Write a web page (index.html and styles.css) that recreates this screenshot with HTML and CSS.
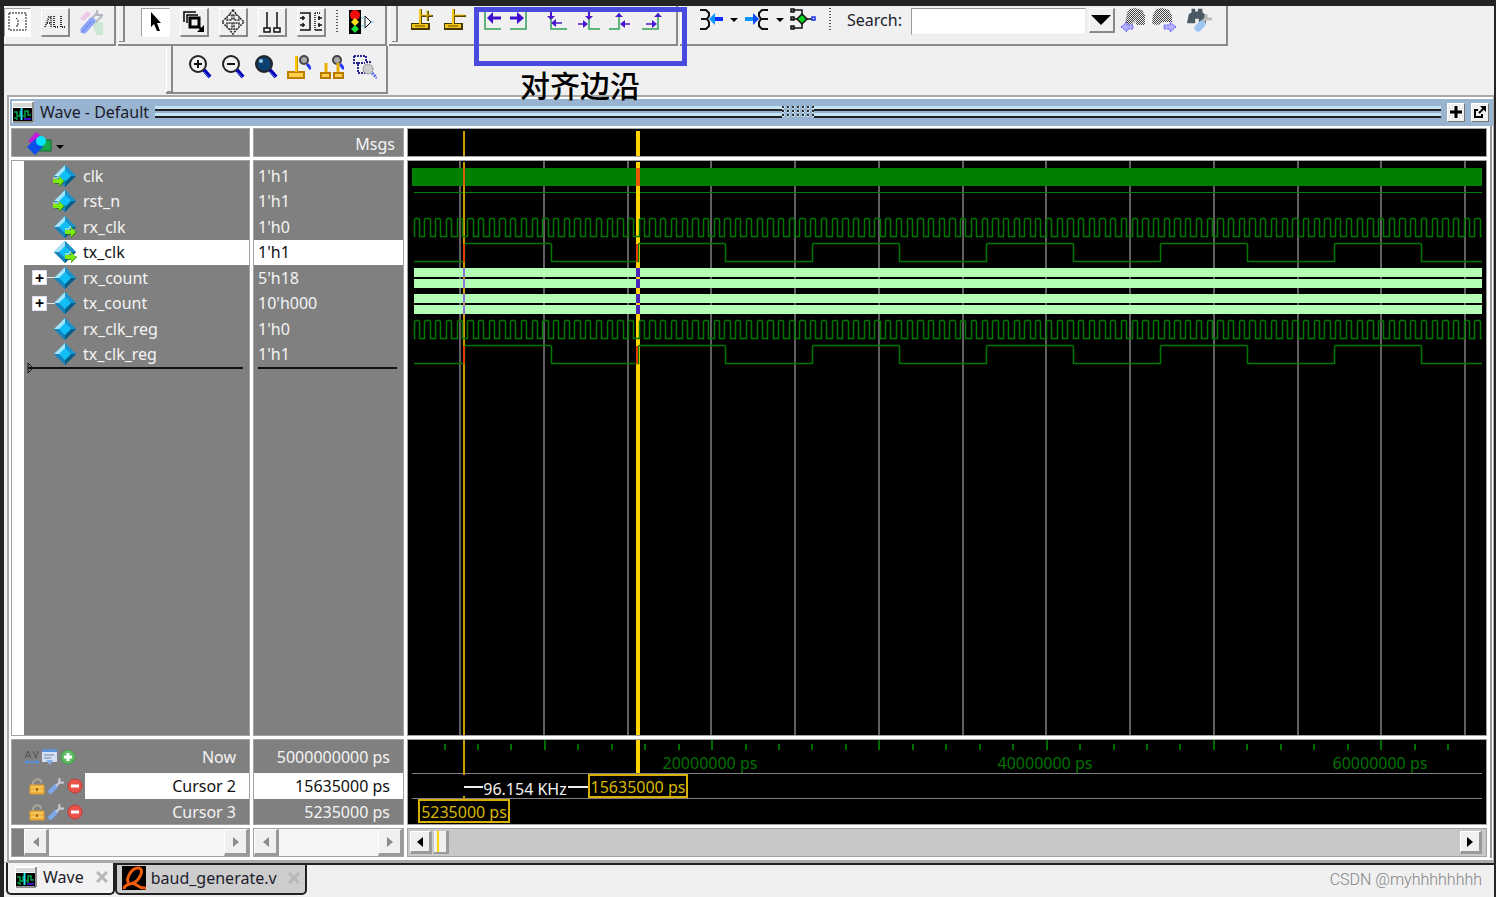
FILE: index.html
```html
<!DOCTYPE html>
<html lang="en">
<head>
<meta charset="utf-8">
<title>Wave - Default</title>
<link rel="stylesheet" href="styles.css">
</head>
<body>
<svg class="defs" aria-hidden="true">
  <symbol id="diamond" viewBox="0 0 22 22">
    <path d="M11 0L22 11L11 22L0 11Z" fill="#1683b5"/><path d="M11 0V6L6 11H0Z" fill="#a5e4fa"/><path d="M11 0L22 11H16L11 6Z" fill="#1893d0"/><path d="M0 11H6L11 16V22Z" fill="#1685bd"/><path d="M22 11L11 22V16L16 11Z" fill="#075f88"/><path d="M11 5L17 11L11 17L5 11Z" fill="#10bff5"/>
  </symbol>
  <symbol id="arrow" viewBox="0 0 12 12"><path d="M0 8H6V12L12 6L11 5L6 9Z" fill="#16720a"/><path d="M0 4H6V1L11 6L6 11V8H0Z" fill="#7ce80c"/><path d="M0 3H5V0" fill="none" stroke="#eaffd8"/></symbol>
  <symbol id="wave" viewBox="0 0 22 22"><path d="M0 0H22V22H0Z" fill="#fff"/><path d="M1 2H20V6H1Z" fill="#d8d8d8"/><path d="M1 7H20V20H1Z"/><path d="M2 11H5V15H8V10M2 17H5V19M11 15H13V10H16V14H19M12 17H14" stroke="#00a547" stroke-width="1.5" fill="none"/><path d="M9.500 7V19" stroke="#29e3f2" stroke-width="2"/><path d="M12 18H19" stroke="#3a12bf" stroke-width="2"/><path d="M21 1V21H1" fill="none" stroke="#222" stroke-width="1"/></symbol>
  <symbol id="lock" viewBox="0 0 16 18"><path d="M4 8V5Q8 0 12 4V6" fill="none" stroke="#aaa598" stroke-width="2"/><path d="M1 8H15V17H1Z" fill="#efb33b" stroke="#dc9a2c"/><path d="M2 10H14M2 14H14" stroke="#ffd878"/><path d="M7 11H9V14H7Z" fill="#a46a10"/></symbol>
  <symbol id="wrench" viewBox="0 0 16 16"><path d="M3 13L8 8" stroke="#7ba7ea" stroke-width="4" stroke-linecap="round"/><path d="M8 8L12 4M11 1V5H15" fill="none" stroke="#c8ccd2" stroke-width="2"/></symbol>
  <symbol id="minus" viewBox="0 0 16 16"><circle cx="8" cy="8" r="7" fill="#e8534a" stroke="#c93a34"/><path d="M4 8H12" stroke="#fff" stroke-width="3"/></symbol>
  <symbol id="lens" viewBox="0 0 24 24"><circle cx="10" cy="9" r="8" stroke="#222" stroke-width="2"/><path d="M16 15L22 22" stroke="#0000b4" stroke-width="4"/><path d="M16 17L21 22" stroke="#4a63e8"/></symbol>
  <symbol id="cross" viewBox="0 0 12 12"><path d="M1 1L11 11M11 1L1 11" stroke="#b8b8b8" stroke-width="3"/></symbol>
  <symbol id="base" viewBox="0 0 22 24"><path d="M0 15H19V22H0Z" fill="#463600"/><path d="M1 16H17V20H1Z" fill="#f0c419"/><path d="M4 18H14" stroke="#6b5200"/><path d="M8 1H11V15H8Z" fill="#6b5200"/><path d="M8 1H10V16H8Z" fill="#f0c419"/></symbol>
  <symbol id="binoc" viewBox="0 0 22 20"><path d="M0 17L2 7L5 5V1H9V4H12V1H17V5L20 7L21 17H13V12H9V17Z"/></symbol>
  <pattern id="hatch" width="2" height="2" patternUnits="userSpaceOnUse"><path d="M0 0H1V1H0ZM1 1H2V2H1Z" fill="#444"/></pattern>
</svg>

<div class="toolbars">
  <div class="toolrow">
    <div class="group first">
      <button class="tool pressed" aria-label="Select region"><svg width="20" height="20" fill="none" stroke="#111" stroke-width="1" stroke-dasharray="2 1"><path d="M1 1H18V18H1ZM8 6L10 8V13M8 14H11"/></svg></button>
      <button class="tool" aria-label="Select all"><svg width="22" height="14" fill="none" stroke="#333" stroke-width="2" stroke-dasharray="1 1"><path d="M1 12L5 2H7V12M3 8H7M10 1V12H14M17 1V12H21"/></svg></button>
      <button class="flat" aria-label="Edit wave"><svg width="27" height="26"><path d="M2 10L9 2L13 5L6 12Z" fill="#ecc7e8"/><path d="M14 13H25V26H18Z" fill="#cce7d6"/><path d="M6 21L14 12" stroke="#8ba5f7" stroke-width="7" stroke-linecap="round" stroke-dasharray="2 1"/><path d="M14 9L20 3M19 1V6H25M18 13L24 7" stroke="#b3b9bf" stroke-width="2" fill="none"/><path d="M3 24L13 13" stroke="#4269ef" stroke-dasharray="1 1"/></svg></button>
    </div>
    <div class="group gripped modes">
      <button class="tool pressed" aria-label="Select mode"><svg width="16" height="22"><path d="M3 1V16L6 13L9 20H12L9 12H13Z"/></svg></button>
      <button class="tool" aria-label="Zoom mode"><svg width="24" height="24" fill="none" stroke="#000"><path d="M2 12V2H14M5 13V5H16" stroke-width="1.500"/><path d="M8 8H17V17H8Z" stroke-width="3"/><path d="M17 17L21 21" stroke-width="2"/><path d="M22 15V22H15Z" fill="#000" stroke="none"/></svg></button>
      <button class="tool" aria-label="Pan mode"><svg width="24" height="26" fill="none" stroke="#222" stroke-width="1.500" stroke-dasharray="2 1"><path d="M12 1L8 6H11V11H6V8L1 13L6 18V14H11V20H8L12 25L16 20H13V14H18V18L23 13L18 8V11H13V6H16Z"/></svg></button>
      <button class="tool" aria-label="Two cursor mode"><svg width="18" height="22" fill="none" stroke="#111" stroke-width="1.500"><path d="M4 1V17M14 1V17M1 17H7V21H1ZM11 17H17V21H11Z"/></svg></button>
      <button class="tool" aria-label="Edit mode"><svg width="24" height="22" fill="none" stroke="#111" stroke-width="1.500"><path d="M1 2H11V19H1M16 19H23M1 7H6M1 14H6M19 7H23M19 14H23M4 5V9M4 12V16M20 5V9M20 12V16"/><path d="M16 2V19M16 2H22" stroke-dasharray="1 1"/></svg></button>
      <span class="dots"></span>
      <button class="flat" aria-label="Stop drawing"><svg width="26" height="26"><path d="M1 1H13V25H1Z"/><circle cx="7" cy="6" r="5" fill="#f20d0d"/><path d="M7 9L11 13L7 17L3 13Z" fill="#ffe11b"/><path d="M7 16L11 20L7 24L3 20Z" fill="#18e038"/><path d="M17 7V19L23 13Z" fill="#fff" stroke="#111"/><path d="M13 9H17M13 17H17M23 13H26" stroke="#61c6e8"/></svg></button>
    </div>
    <div class="group gripped edges">
      <div class="set wide">
        <button class="flat" aria-label="Insert cursor"><svg width="22" height="24" fill="none"><use href="#base" width="22" height="24"/><path d="M11 8H22M17 3V13" stroke="#5d4700" stroke-width="2"/><path d="M10 7H21M16 2V12" stroke="#f0c419"/></svg></button>
        <button class="flat" aria-label="Delete cursor"><svg width="22" height="24" fill="none"><use href="#base" width="22" height="24"/><path d="M11 8H22" stroke="#5d4700" stroke-width="2"/><path d="M10 7H21" stroke="#f0c419"/></svg></button>
      </div>
      <div class="set near">
        <button class="flat" aria-label="Previous transition"><svg width="20" height="24" fill="none"><path d="M1 3V21H17" stroke="#2f9e56" stroke-width="1.500"/><path d="M17 10H5" stroke="#3f0dce" stroke-width="3"/><path d="M9 4V16L3 10Z" fill="#3f0dce"/></svg></button>
        <button class="flat" aria-label="Next transition"><svg width="20" height="24" fill="none"><path d="M17 3V21H1" stroke="#2f9e56" stroke-width="1.500"/><path d="M1 10H13" stroke="#3f0dce" stroke-width="3"/><path d="M8 4V16L15 10Z" fill="#3f0dce"/></svg></button>
      </div>
      <div class="set">
        <button class="flat" aria-label="Previous falling edge"><svg width="22" height="24" fill="none"><path d="M4 3V21H20" stroke="#2f9e56" stroke-width="1.500"/><path d="M15 15H6" stroke="#4a16cf" stroke-width="1.500"/><path d="M9 11V19L4 15ZM0 8H8L4 12ZM3 4H5V8H3Z" fill="#4a16cf"/></svg></button>
        <button class="flat" aria-label="Next falling edge"><svg width="22" height="24" fill="none"><path d="M11 3V21H22" stroke="#2f9e56" stroke-width="1.500"/><path d="M0 16H6" stroke="#4a16cf" stroke-width="1.500"/><path d="M5 12V20L10 16ZM7 8H15L11 12ZM10 4H12V8H10Z" fill="#4a16cf"/></svg></button>
        <button class="flat" aria-label="Previous rising edge"><svg width="22" height="24" fill="none"><path d="M0 21H10V5" stroke="#2f9e56" stroke-width="1.500"/><path d="M21 16H14" stroke="#4a16cf" stroke-width="1.500"/><path d="M16 12V20L11 16ZM6 9H14L10 5Z" fill="#4a16cf"/></svg></button>
        <button class="flat" aria-label="Next rising edge"><svg width="22" height="24" fill="none"><path d="M2 21H18V5" stroke="#2f9e56" stroke-width="1.500"/><path d="M6 16H13" stroke="#4a16cf" stroke-width="1.500"/><path d="M12 12V20L17 16ZM14 9H22L18 5Z" fill="#4a16cf"/></svg></button>
      </div>
      <div class="callout"><span lang="zh-CN">对齐边沿</span></div>
    </div>
    <div class="group find">
      <button class="flat" aria-label="Trace drivers"><svg width="26" height="24" fill="none"><path d="M2 2H8L11 5V8L9 11L11 14V18L8 21H2M3 11H9" stroke="#111" stroke-width="2"/><path d="M16 11H25" stroke="#0a2fff" stroke-width="4"/><path d="M17 5V17L11 11Z" fill="#0a94ff"/></svg></button>
      <button class="flat" aria-label="Driver options"><svg width="10" height="6"><path d="M1 1H9L5 5Z"/></svg></button>
      <button class="flat" aria-label="Trace readers"><svg width="26" height="24" fill="none"><path d="M24 2H18L15 5V8L17 11L15 14V18L18 21H24M17 11H24" stroke="#111" stroke-width="2"/><path d="M1 11H10" stroke="#0a94ff" stroke-width="4"/><path d="M9 5V17L15 11Z" fill="#0a4fff"/></svg></button>
      <button class="flat" aria-label="Reader options"><svg width="10" height="6"><path d="M1 1H9L5 5Z"/></svg></button>
      <button class="flat" aria-label="Show connections"><svg width="26" height="24" fill="none" stroke="#111" stroke-width="1.500"><path d="M4 2H12V20H4M3 11H22"/><path d="M1 1H4V4H1ZM1 9H4V12H1ZM1 18H4V21H1Z" fill="#777"/><path d="M12 6L17 11L12 16L7 11Z" fill="#0bd51c"/><path d="M22 9H25V12H22Z" stroke="#1734f0"/></svg></button>
      <span class="dots"></span>
      <label for="search">Search:</label>
      <input id="search" type="text">
      <button class="drop" aria-label="Search history"><svg width="20" height="12"><path d="M0 1H20L10 11Z"/></svg></button>
      <button class="flat" aria-label="Search backward"><svg width="26" height="26"><g fill="url(#hatch)"><path d="M5 17L7 6L10 2L15 1L22 3L25 8V18H16V13L11 18Z"/></g><path d="M1 20L7 15V18H13V22H7V25Z" fill="#b2b0ff" stroke="#5b59ff" stroke-dasharray="2 1"/></svg></button>
      <button class="flat" aria-label="Search forward"><svg width="26" height="26"><g fill="url(#hatch)"><path d="M1 17L2 8L5 2L11 1L18 3L21 9V15H12L7 18Z"/></g><path d="M25 20L19 15V18H13V22H19V25Z" fill="#b2b0ff" stroke="#5b59ff" stroke-dasharray="2 1"/></svg></button>
      <button class="flat options" aria-label="Search options"><svg width="26" height="26"><use href="#binoc" width="20" height="20" fill="#4b5964"/><path d="M11 21L15 17" stroke="#9cc5f2" stroke-width="7" stroke-linecap="round"/><path d="M16 14L21 10M19 7V12H25" fill="none" stroke="#bdbdbd" stroke-width="3"/></svg></button>
    </div>
  </div>
  <div class="toolrow second">
    <div class="group gripped zooms">
      <button class="flat" aria-label="Zoom in"><svg width="24" height="24"><use href="#lens" fill="#f3f3f3"/><path d="M6 9H14M10 5V13" stroke="#111" stroke-width="2"/></svg></button>
      <button class="flat" aria-label="Zoom out"><svg width="24" height="24"><use href="#lens" fill="#f3f3f3"/><path d="M6 9H14" stroke="#111" stroke-width="2"/></svg></button>
      <button class="flat" aria-label="Zoom full"><svg width="24" height="24"><use href="#lens" fill="#0b3f70"/><circle cx="7" cy="6" r="2" fill="#9cc7e5"/></svg></button>
      <button class="flat" aria-label="Zoom on cursor"><svg width="24" height="24" fill="none"><path d="M1 17H17V23H1Z" fill="#ffd24a" stroke="#c27c00" stroke-width="2"/><path d="M8 1H11V17H8Z" fill="#d89400"/><path d="M8 1H10V17H8Z" fill="#ffc800"/><circle cx="17" cy="5" r="4" fill="#aaa" stroke="#444" stroke-width="2"/><path d="M20 9L24 14" stroke="#2335f5" stroke-width="3"/></svg></button>
      <button class="flat" aria-label="Zoom between cursors"><svg width="24" height="24"><circle cx="17" cy="5" r="4" fill="#aaa" stroke="#444" stroke-width="2"/><path d="M20 9L24 14" stroke="#2335f5" stroke-width="3"/><path d="M6 8V18M18 8V18" stroke="#eab000" stroke-width="3"/><path d="M1 18H10V23H1ZM14 18H23V23H14Z" fill="#ffd24a" stroke="#b97800" stroke-width="2"/></svg></button>
      <button class="flat" aria-label="Zoom region"><svg width="24" height="24" fill="none"><path d="M1 1H13V7H18M1 1V8H5V18H12M5 8H12" stroke="#272793" stroke-width="2" stroke-dasharray="2 1"/><circle cx="15" cy="14" r="5" fill="#ccc" stroke="#555" stroke-dasharray="1 1"/><path d="M19 18L24 23" stroke="#5c68f4" stroke-width="3" stroke-dasharray="2 1"/></svg></button>
    </div>
  </div>
</div>

<main class="window">
  <header class="titlebar">
    <svg width="22" height="22"><use href="#wave"/></svg>
    <h1>Wave - Default</h1>
    <span class="rails"></span><span class="grip"></span><span class="rails"></span>
    <button aria-label="Zoom pane"><svg width="14" height="14"><path d="M7 1V13M1 7H13" stroke="#000" stroke-width="3"/></svg></button>
    <button aria-label="Undock pane"><svg width="14" height="14" fill="none" stroke="#000" stroke-width="2"><path d="M5 5H2V12H9V9M6 8L12 2"/><path d="M7 1H13V7Z" fill="#000" stroke="none"/></svg></button>
  </header>

  <div class="panes">
    <div class="cell corner"><svg width="26" height="26"><path d="M1 10L9 1L15 6L7 14Z" fill="#c31bd8"/><path d="M14 9H24V20H12Z" fill="#18a84b" stroke="#08702c"/><path d="M8 8L16 16L8 24L0 16Z" fill="#0b4fe8"/><circle cx="14" cy="10" r="5" fill="#08e5fa"/></svg><svg width="10" height="6"><path d="M1 1H9L5 5Z"/></svg></div>
    <div class="cell msgs">Msgs</div>
    <div class="cell black"><svg class="plot" id="head"></svg></div>

    <div class="cell names">
      <ul class="signals">
        <li><svg class="sig"><use href="#diamond" x="1" width="22" height="22"/><use href="#arrow" x="0" y="10" width="12" height="12"/></svg>clk</li>
        <li><svg class="sig"><use href="#diamond" x="1" width="22" height="22"/><use href="#arrow" x="0" y="10" width="12" height="12"/></svg>rst_n</li>
        <li><svg class="sig"><use href="#diamond" x="1" width="22" height="22"/><use href="#arrow" x="12" y="10" width="12" height="12"/></svg>rx_clk</li>
        <li class="on"><svg class="sig"><use href="#diamond" x="1" width="22" height="22"/><use href="#arrow" x="12" y="10" width="12" height="12"/></svg>tx_clk</li>
        <li><button class="expand" aria-label="Expand rx_count">+</button><svg class="sig"><use href="#diamond" x="1" width="22" height="22"/></svg>rx_count</li>
        <li><button class="expand" aria-label="Expand tx_count">+</button><svg class="sig"><use href="#diamond" x="1" width="22" height="22"/></svg>tx_count</li>
        <li><svg class="sig"><use href="#diamond" x="1" width="22" height="22"/></svg>rx_clk_reg</li>
        <li><svg class="sig"><use href="#diamond" x="1" width="22" height="22"/></svg>tx_clk_reg</li>
      </ul>
      <div class="endline"><svg width="8" height="12"><path d="M1 1V11L6 6Z" fill="none" stroke="#111"/></svg></div>
    </div>
    <div class="cell values">
      <ul class="signals">
        <li>1'h1</li><li>1'h1</li><li>1'h0</li><li class="on">1'h1</li><li>5'h18</li><li>10'h000</li><li>1'h0</li><li>1'h1</li>
      </ul>
      <div class="endline"></div>
    </div>
    <div class="cell black"><svg class="plot" id="waves"></svg></div>

    <div class="cell cursors">
      <div class="now"><span class="icons"><svg width="16" height="16"><path d="M1 9L4 2L7 9M2 7H6M9 2L12 9L14 2" fill="none" stroke="#505050"/><path d="M1 13H15M3 11V15M13 11V15" stroke="#5a8ed0" stroke-width="2"/></svg><svg width="18" height="18"><path d="M1 1H16V14H1Z" fill="#d3e0f3"/><path d="M1 1H16V4H1Z" fill="#5c91d8"/><path d="M3 7H13M3 10H10" stroke="#6d86ae"/><path d="M5 12H12L9 17Z" fill="#85b3e9"/></svg><svg width="16" height="16"><circle cx="8" cy="8" r="7" fill="#62bb62" stroke="#429c46"/><path d="M8 4V12M4 8H12" stroke="#fff" stroke-width="3"/></svg></span><span class="label">Now</span></div>
      <div><span class="icons"><svg width="16" height="18"><use href="#lock"/></svg><svg width="18" height="18"><use href="#wrench"/></svg><svg width="16" height="16"><use href="#minus"/></svg></span><span class="label on">Cursor 2</span></div>
      <div><span class="icons"><svg width="16" height="18"><use href="#lock"/></svg><svg width="18" height="18"><use href="#wrench"/></svg><svg width="16" height="16"><use href="#minus"/></svg></span><span class="label">Cursor 3</span></div>
    </div>
    <div class="cell times"><div class="now">5000000000 ps</div><div class="on">15635000 ps</div><div>5235000 ps</div></div>
    <div class="cell black"><svg class="plot" id="ruler"></svg></div>

    <div class="cell scroll inset"><button aria-label="Scroll names left"><svg width="10" height="12"><path d="M8 1V11L2 6Z"/></svg></button><span></span><button aria-label="Scroll names right"><svg width="10" height="12"><path d="M2 1V11L8 6Z"/></svg></button></div>
    <div class="cell scroll"><button aria-label="Scroll values left"><svg width="10" height="12"><path d="M8 1V11L2 6Z"/></svg></button><span></span><button aria-label="Scroll values right"><svg width="10" height="12"><path d="M2 1V11L8 6Z"/></svg></button></div>
    <div class="cell scroll live"><button aria-label="Scroll waves left"><svg width="10" height="12"><path d="M8 1V11L2 6Z"/></svg></button><i class="thumb"></i><span></span><button aria-label="Scroll waves right"><svg width="10" height="12"><path d="M2 1V11L8 6Z"/></svg></button></div>
  </div>
</main>

<footer class="tabs">
  <div class="tab active"><svg width="22" height="22"><use href="#wave"/></svg><a href="#waves">Wave</a><button class="flat" aria-label="Close Wave"><svg width="12" height="12"><use href="#cross"/></svg></button></div>
  <div class="tab"><svg width="24" height="24"><path d="M0 0H24V24H0Z"/><path d="M7 17C3 14 9 2 16 2C24 2 17 17 8 18C4 19 2 20 2 23M10 17C14 17 16 23 24 22" fill="none" stroke="#f25c0a" stroke-width="3"/></svg><a href="#waves">baud_generate.v</a><button class="flat" aria-label="Close baud_generate.v"><svg width="12" height="12"><use href="#cross"/></svg></button></div>
  <p class="credit">CSDN @myhhhhhhhh</p>
</footer>
<script src="script.js"></script>
</body>
</html>
```
FILE: styles.css
```css
* { box-sizing: border-box; }
body {
  margin: 0; height: 100vh; display: flex; flex-direction: column; overflow: hidden;
  border: solid #242424; border-width: 6px 2px 0 4px; background: #f0f0f0;
  font: 16px/20px "Noto Sans", "DejaVu Sans", sans-serif; color: #1c1c2c;
}
button { font: inherit; padding: 0; margin: 0; border: 0; background: none; color: inherit; display: flex; align-items: center; justify-content: center; flex: none; }
svg { display: block; flex: none; }
.defs { position: absolute; width: 0; height: 0; }
a { color: inherit; text-decoration: none; }

.toolbars { flex: none; height: 89px; }
.toolrow { display: flex; gap: 2px; height: 40px; }
.group { position: relative; display: flex; align-items: center; gap: 10px; border: solid #8a8a8a; border-width: 0 2px 2px 0; padding-bottom: 6px; box-shadow: inset 1px 0 #fff; }
.gripped::before { content: ""; align-self: stretch; width: 4px; margin: 0 0 -4px 1px; border-right: 2px solid #8a8a8a; border-bottom: 1px solid #8a8a8a; flex: none; }
.first { width: 112px; }
.first .pressed { width: 27px; }
.first .flat { margin-left: -2px; }
.modes { width: 269px; }
.modes .tool:first-of-type { margin-left: 6px; }
.tool { width: 29px; height: 29px; border: solid; border-width: 1px 2px 2px 1px; border-color: #fff #8a8a8a #8a8a8a #fff; }
.pressed { background: #fff; border-width: 1px; border-color: #a0a0a0 #fff #fff #a0a0a0; }
.dots { width: 2px; height: 24px; background: repeating-linear-gradient(#555 0 1px, transparent 1px 3px); flex: none; }
.edges { width: 289px; gap: 18px; padding: 0 0 10px 2px; }
.edges::before { margin: 0 -5px -8px 1px; }
.set { display: flex; gap: 9px; }
.wide { gap: 11px; }
.near { gap: 5px; }
.callout { position: absolute; z-index: 1; left: 85px; top: 1px; width: 213px; height: 59px; border: 5px solid #484bdd; pointer-events: none; }
.callout span { position: absolute; left: 41px; top: 54px; white-space: nowrap; color: #000; font: 500 30px/36px "Noto Sans CJK SC", sans-serif; }
.find { width: 548px; padding: 0 0 10px 18px; gap: 5px; }
.find .dots { margin: 0 11px 0 8px; }
.find label { margin-right: 4px; }
.find input { width: 175px; height: 27px; border: 1px solid; border-color: #999 #e8e8e8 #e8e8e8 #999; background: #fff; font: inherit; padding: 0 4px; margin: 2px -2px 0 0; }
.drop { width: 26px; height: 25px; border: solid; border-width: 1px 2px 2px 1px; border-color: #fff #8a8a8a #8a8a8a #fff; }
.options { margin-left: 5px; }
.second { height: 48px; padding-left: 162px; }
.zooms { width: 222px; padding-bottom: 4px; gap: 9px; }
.zooms .flat:first-of-type { margin-left: 6px; }

.window { flex: 1; min-height: 0; display: flex; flex-direction: column; margin-left: 3px; border: 2px solid #aaa; border-width: 2px 1px 2px 2px; padding: 2px 0 2px 1px; background: #fff; }
.titlebar { flex: none; display: flex; align-items: center; height: 27px; padding: 0 4px 1px 2px; background: #99b4d1; gap: 6px; }
.titlebar h1 { font: inherit; margin: 0; }
.rails { flex: 1; height: 12px; border: solid #222; border-width: 0 0 2px; background: linear-gradient(#c3e4f2 0 3px, #222 3px 5px, #99b4d1 5px 7px, #c3e4f2 7px); }
.grip { width: 32px; height: 12px; margin: 0 -6px; background: radial-gradient(circle at 1px 1px, #333 1px, #c8e4f2 1px 2px, transparent 2px) 0 0 / 5px 4px; }
.titlebar button { width: 18px; height: 19px; background: #f0f0f0; border: 1px solid; border-color: #fff #777 #777 #fff; }

.panes { flex: 1; min-height: 0; display: grid; grid-template: 27px minmax(0, 1fr) 84px 27px / 237px 149px minmax(0, 1fr); gap: 5px; padding: 3px 4px 2px 2px; background: #fff; margin-right: 1px; border-right: 2px solid #999; }
.cell { background: #808080; color: #f4f4f4; box-shadow: 0 0 0 1px #a2a2a2; min-width: 0; overflow: hidden; }
.black { background: #000; }
.plot { width: 100%; height: 100%; }
.corner { display: flex; align-items: center; gap: 1px; padding: 3px 0 0 15px; }
.corner svg + svg { margin: 6px 0 0 1px; }
.msgs { text-align: right; padding: 5px 8px 0 0; }
.names { border-left: 12px solid #fff; }
.signals { list-style: none; margin: 0; padding: 2px 0 0; display: grid; grid-template-rows: repeat(8, 1fr); height: 206px; }
.signals li { display: flex; align-items: center; padding-left: 4px; }
.names li { padding-left: 29px; gap: 6px; }
.sig { width: 24px; height: 22px; }
.on, .signals .on { background: #fff; color: #111; }
.names li:has(.expand) { padding-left: 8px; gap: 0; }
.names li:has(.expand) .sig { margin-right: 6px; }
.expand { position: relative; width: 15px; height: 15px; margin-right: 6px; background: #fff; border: 1px solid #dde; color: #000; font-weight: 700; line-height: 12px; }
.expand::after { content: ""; position: absolute; left: 14px; top: 6px; width: 8px; height: 1px; background: #e4e4e4; }
.endline { display: flex; align-items: center; height: 2px; margin: 0 6px 0 4px; background: #111; }
.names .endline svg { margin-left: -1px; }
.cursors > div, .times > div { display: flex; height: 26px; align-items: center; }
.cursors > .now, .times > .now { height: 33px; }
.icons { display: flex; align-items: center; width: 73px; padding-left: 17px; gap: 2px; flex: none; }
.now .icons { padding-left: 12px; gap: 1px; }
.label { flex: 1; align-self: stretch; display: flex; align-items: center; justify-content: flex-end; padding-right: 13px; }
.times > div { justify-content: flex-end; padding-right: 13px; }
.scroll { display: flex; }
.inset { padding-left: 12px; }
.scroll span { flex: 1; background: #f5f5f5; }
.scroll button { width: 25px; background: #f0f0f0; border: solid; border-width: 1px 3px 3px 1px; border-color: #fff #999 #999 #fff; fill: #8c8c8c; }
.live { background: #c8c8c8; padding: 2px 4px 2px 2px; }
.live span { background: #c8c8c8; }
.live button { width: 22px; fill: #000; }
.thumb { width: 15px; margin-left: 2px; background: linear-gradient(90deg, #f0f0f0 3px, #ffd500 3px 5px, #f0f0f0 5px); border: solid #999; border-width: 0 3px 2px 0; }

.tabs { flex: none; display: flex; height: 35px; padding-left: 2px; align-items: flex-start; border-top: 1px solid #aaa; }
.tab { display: flex; align-items: center; height: 32px; gap: 6px; padding: 0 5px 3px 7px; border: solid #222; border-width: 0 2px 2px 2px; border-radius: 0 0 5px 5px; color: #1c1c2c; }
.tab .flat { margin-left: 6px; }
.tab + .tab { background: #cdcdcd; border-top-width: 2px; padding-left: 5px; gap: 5px; }
.active { background: #f2f2f2; }
.credit { flex: 1; align-self: stretch; margin: 0; border-top: 2px solid #222; padding: 5px 12px 0 0; text-align: right; color: #858585; font-family: Roboto, "Liberation Sans", sans-serif; font-weight: 300; }
```
FILE: script.js
```js
// Draws the clock traces, grid, cursors and time ruler to the width of the pane.
const $ = (id) => document.getElementById(id);
const rect = (x, y, w, h, fill) => `<rect x="${x}" y="${y}" width="${w}" height="${h}" fill="${fill}"/>`;
const label = (x, y, fill, text, anchor = "middle") => `<text x="${x}" y="${y}" fill="${fill}" text-anchor="${anchor}">${text}</text>`;
const START = 6, GRID = 83.75, FIRST = 52, C3 = 56, C2 = 230;

function square(from, firstRise, half, top, bottom, end) {
  let d = `M${from} ${bottom}`, x = firstRise, high = false;
  while (x < end) {
    const px = Math.floor(x) + 0.5;
    if (px > from) d += high ? `H${px - 1}L${px} ${top + 1}V${bottom}` : `H${px}V${top + 1}L${px + 1} ${top}`;
    high = !high;
    x += half;
  }
  return `<path d="${d}H${end}" fill="none" stroke="#007800" stroke-width="1.5"/>`;
}

function draw() {
  const width = $("waves").clientWidth, height = $("waves").clientHeight, end = width - 4;
  $("head").innerHTML = rect(C3 - 1, 2, 2, 30, "#c79c00") + rect(C2 - 2, 2, 4, 30, "#ffd400");

  let w = "";
  for (let x = FIRST; x < end; x += GRID) w += rect(Math.round(x) - 1, 0, 2, height, "#606060");
  w += rect(4, 7, end - 4, 18, "#008000") + rect(START, 31, end - START, 1, "#008000");
  for (const y of [107, 118, 133, 144]) w += rect(START, y, end - START, 9, "#b3ffb3");
  w += rect(C3 - 1, 1, 2, height, "#c79c00") + rect(C2 - 2, 1, 4, height, "#ffd400");
  for (const dy of [0, 102]) {
    w += square(START, 6.2, 5.357, 57.5 + dy, 75.5 + dy, end);
    w += square(START, C3, 87.08, 82.5 + dy, 100.5 + dy, end);
  }
  for (const [x, width] of [[C3 - 1, 2], [C2 - 2, 4]]) {
    w += rect(x, 7, width, 18, "#e85a00");
    for (const y of [83, 185]) w += rect(x, y, 2, 18, "#e83a00");
    for (const y of [107, 118, 133, 144]) w += rect(x, y, width, 9, width > 2 ? "#4b24b8" : "#8a78d8");
  }
  $("waves").innerHTML = w;

  let r = "";
  for (let i = 0, x = 36; x < end - 20; i++, x += 33.45) {
    const major = i % 5 === 3;
    r += rect(Math.floor(x), major ? 0 : 4, 2, major ? 10 : 6, "#006a00");
  }
  for (let n = 1; n * 335 < end + 20; n++) r += label(302 + (n - 1) * 335, 29, "#007000", `${n * 2}0000000`.slice(0, 8) + " ps");
  r += rect(4, 33, end - 4, 1, "#808080") + rect(4, 58, end - 4, 1, "#808080");
  r += rect(C3 - 1, 0, 2, 35, "#c79c00") + rect(C3 - 1, 56, 2, 3, "#c79c00") + rect(C2 - 2, 0, 4, 33, "#ffd400");
  r += rect(C3, 46, 19, 2, "#eee") + rect(160, 46, 20, 2, "#eee") + label(117, 55, "#f4f4f4", "96.154 KHz");
  for (const [x, y, w2, text] of [[181, 35, 98, "15635000 ps"], [11, 60, 90, "5235000 ps"]]) {
    r += `<rect x="${x}" y="${y}" width="${w2}" height="22" fill="#000" stroke="#d8b000" stroke-width="2"/>`;
    r += label(x + w2 / 2, y + 18, "#d8b800", text);
  }
  $("ruler").innerHTML = r;
}
draw();
addEventListener("resize", draw);
```
